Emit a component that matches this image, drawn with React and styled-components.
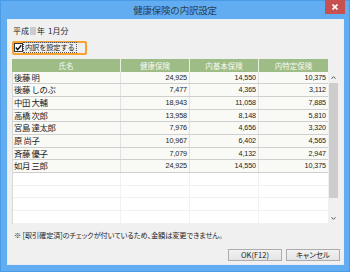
import React from "react";
import styled, { createGlobalStyle } from "styled-components";

const Global = createGlobalStyle`
  html, body { margin: 0; padding: 0; background: #5fabf1; }
  body { width: 350px; height: 272px; overflow: hidden; }
  * { box-sizing: border-box; }
`;

const JP = `"Noto Sans CJK JP", "Noto Sans", sans-serif`;

const Window = styled.div`
  width: 350px;
  height: 272px;
  background: #62adf2;
  border: 1px solid #4a9be6;
  display: flex;
  flex-direction: column;
  font-family: ${JP};
  color: #1f1f1f;
`;

const TitleBar = styled.div`
  height: 19px;
  position: relative;
  display: flex;
  align-items: center;
  justify-content: center;
`;

const Title = styled.div`
  font-size: 9.5px;
  line-height: 12px;
  color: #2a3d52;
  letter-spacing: -0.2px;
`;

const CloseBtn = styled.div`
  position: absolute;
  top: -1px;
  right: 4px;
  width: 20px;
  height: 14px;
  background: #c75050;
  display: flex;
  align-items: center;
  justify-content: center;
`;

const Client = styled.div`
  flex: 1;
  margin: 0 5px 6px 6px;
  background: #f0f0f0;
  border: 1px solid #e6edf5;
  padding: 5px 2px 3px 4px;
  display: flex;
  flex-direction: column;
`;

const PeriodRow = styled.div`
  height: 12px;
  display: flex;
  align-items: center;
  font-size: 8px;
  line-height: 12px;
  padding-left: 1px;
`;

const Masked = styled.span`
  display: inline-block;
  width: 6px;
  height: 8px;
  background: #cbcbcb;
  margin: 0 1px;
`;

const Gap = styled.span`
  display: inline-block;
  width: ${(p) => p.w}px;
`;

const CheckRow = styled.div`
  margin-top: 4px;
  width: 75px;
  height: 14px;
  border: 2px solid #f7a230;
  border-radius: 2px;
  display: flex;
  align-items: center;
  padding-left: 0;
  gap: 1px;
`;

const Box = styled.div`
  width: 9px;
  height: 9px;
  background: #fff;
  border: 1px solid #333;
  display: flex;
  align-items: center;
  justify-content: center;
`;

const CheckLabel = styled.span`
  font-size: 7.2px;
  line-height: 9px;
  outline: 1px dotted #555;
  padding: 0 1px;
  letter-spacing: -0.1px;
  white-space: nowrap;
`;

const TableWrap = styled.div`
  margin-top: 4px;
  width: 326px;
  display: flex;
  flex-direction: column;
`;

const COLS = "108px 69px 69px 70px";

const HeaderRow = styled.div`
  width: 316px;
  height: 13px;
  display: grid;
  grid-template-columns: ${COLS};
  background: #9dbc86;
`;

const HeadCell = styled.div`
  font-size: 7.5px;
  line-height: 13px;
  color: #f7faf2;
  text-align: center;
  border-left: ${(p) => (p.first ? "none" : "1px solid #e9f0e2")};
`;

const BodyWrap = styled.div`
  display: flex;
  height: 152.4px;
`;

const Rows = styled.div`
  width: 316px;
  background: #fff;
  border-left: 1px solid #d9d9d9;
`;

const Row = styled.div`
  height: 12.7px;
  display: grid;
  grid-template-columns: 107px 69px 69px 70px;
  background: ${(p) => (p.empty ? "#fff" : "#f9f9f5")};
  border-bottom: 1px solid ${(p) => (p.empty ? "#f1f1f1" : "#cfcfcf")};
`;

const Cell = styled.div`
  font-family: ${(p) => (p.num ? `"Liberation Sans", Arial, sans-serif` : JP)};
  font-size: ${(p) => (p.num ? "7.2px" : "8.4px")};
  line-height: 11.7px;
  text-align: ${(p) => (p.num ? "right" : "left")};
  padding: ${(p) => (p.num ? "0 2px 0 0" : "0 0 0 1px")};
  border-left: ${(p) => (p.first ? "none" : `1px solid ${p.empty ? "#f1f1f1" : "#e2e2e2"}`)};
  white-space: nowrap;
  letter-spacing: ${(p) => (p.num ? "-0.1px" : "-0.4px")};
  color: #1b1b1b;
`;

const ScrollBar = styled.div`
  width: 10px;
  background: #f0f0f0;
  display: flex;
  flex-direction: column;
  align-items: center;
`;

const Arrow = styled.div`
  height: 11px;
  width: 10px;
  display: flex;
  align-items: center;
  justify-content: center;
`;

const Thumb = styled.div`
  width: 9px;
  margin-left: 1px;
  height: 115px;
  background: #cdcdcd;
`;

const Track = styled.div`
  flex: 1;
`;

const Note = styled.div`
  margin-top: 6px;
  height: 11px;
  font-size: 7.2px;
  line-height: 11px;
  padding-left: 2px;
  font-feature-settings: "palt";
  letter-spacing: -0.1px;
  white-space: nowrap;
`;

const Buttons = styled.div`
  margin-top: 8px;
  display: flex;
  justify-content: flex-end;
  gap: 4px;
  padding-right: 1px;
`;

const Button = styled.div`
  width: 54px;
  height: 12px;
  border: 1px solid #acacac;
  background: linear-gradient(#f2f2f2, #e4e4e4);
  font-size: 7.5px;
  line-height: 10px;
  text-align: center;
  font-feature-settings: "palt";
  color: #1b1b1b;
`;

const data = [
  ["後藤 明", "24,925", "14,550", "10,375"],
  ["後藤 しのぶ", "7,477", "4,365", "3,112"],
  ["中田 大輔", "18,943", "11,058", "7,885"],
  ["高橋 次郎", "13,958", "8,148", "5,810"],
  ["宮島 達太郎", "7,976", "4,656", "3,320"],
  ["原 尚子", "10,967", "6,402", "4,565"],
  ["斉藤 優子", "7,079", "4,132", "2,947"],
  ["如月 三郎", "24,925", "14,550", "10,375"],
];

const Chevron = ({ up }) => (
  <svg width="5" height="3" viewBox="0 0 5 3">
    <path
      d={up ? "M0.5 2.7 L2.5 0.7 L4.5 2.7" : "M0.5 0.3 L2.5 2.3 L4.5 0.3"}
      fill="none"
      stroke="#555"
      strokeWidth="1"
    />
  </svg>
);

export default function App() {
  return (
    <>
      <Global />
      <Window>
        <TitleBar>
          <Title>健康保険の内訳設定</Title>
          <CloseBtn>
            <svg width="6" height="6" viewBox="0 0 6 6">
              <path d="M0.5 0.5 L5.5 5.5 M5.5 0.5 L0.5 5.5" stroke="#fff" strokeWidth="1.6" />
            </svg>
          </CloseBtn>
        </TitleBar>
        <Client>
          <PeriodRow>
            平成<Masked />年<Gap w={3} />1月分
          </PeriodRow>
          <CheckRow>
            <Box>
              <svg width="7" height="7" viewBox="0 0 7 7">
                <path d="M0.8 3.6 L2.7 5.6 L6.3 1.2" fill="none" stroke="#111" strokeWidth="1.4" />
              </svg>
            </Box>
            <CheckLabel>内訳を設定する</CheckLabel>
          </CheckRow>
          <TableWrap>
            <HeaderRow>
              <HeadCell first>氏名</HeadCell>
              <HeadCell>健康保険</HeadCell>
              <HeadCell>内基本保険</HeadCell>
              <HeadCell>内特定保険</HeadCell>
            </HeaderRow>
            <BodyWrap>
              <Rows>
                {data.map((r) => (
                  <Row key={r[0]}>
                    <Cell first>{r[0]}</Cell>
                    <Cell num>{r[1]}</Cell>
                    <Cell num>{r[2]}</Cell>
                    <Cell num>{r[3]}</Cell>
                  </Row>
                ))}
                {[0, 1, 2, 3].map((i) => (
                  <Row key={"e" + i} empty>
                    <Cell first empty />
                    <Cell num empty />
                    <Cell num empty />
                    <Cell num empty />
                  </Row>
                ))}
              </Rows>
              <ScrollBar>
                <Arrow>
                  <Chevron up />
                </Arrow>
                <Thumb />
                <Track />
                <Arrow>
                  <Chevron />
                </Arrow>
              </ScrollBar>
            </BodyWrap>
          </TableWrap>
          <Note>※ [取引確定済]のチェックが付いているため、金額は変更できません。</Note>
          <Buttons>
            <Button>OK(F12)</Button>
            <Button>キャンセル</Button>
          </Buttons>
        </Client>
      </Window>
    </>
  );
}
